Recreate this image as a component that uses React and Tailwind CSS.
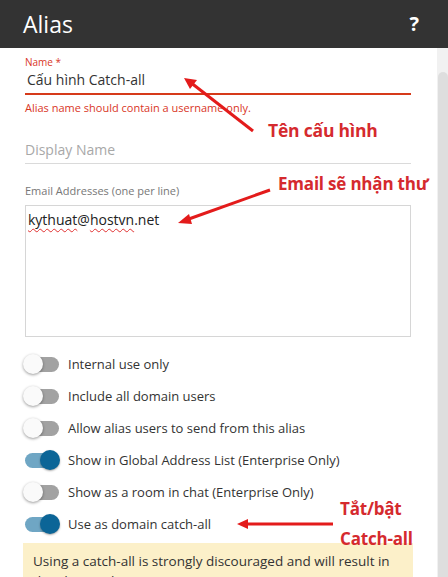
import React from 'react';

const toggles = [
  { label: 'Internal use only', on: false },
  { label: 'Include all domain users', on: false },
  { label: 'Allow alias users to send from this alias', on: false },
  { label: 'Show in Global Address List (Enterprise Only)', on: true },
  { label: 'Show as a room in chat (Enterprise Only)', on: false },
  { label: 'Use as domain catch-all', on: true },
];

const Toggle = ({ on }) => (
  <div className="relative w-[35px] h-[20px] flex items-center shrink-0">
    <div className={`w-[34px] h-[15px] rounded-full ${on ? 'bg-[#6fa6c4]' : 'bg-[#a2a2a2]'}`} />
    {on ? (
      <div className="absolute right-0 top-0 w-[20px] h-[20px] rounded-full bg-[#0b6597] shadow-[0_1px_2px_rgba(0,0,0,0.35)]" />
    ) : (
      <div className="absolute left-[-2px] top-0 w-[20px] h-[20px] rounded-full bg-[#fafafa] shadow-[0_1px_3px_rgba(0,0,0,0.4)]" />
    )}
  </div>
);

const Squiggle = ({ children }) => (
  <span className="underline decoration-wavy decoration-[#e03030] decoration-1 underline-offset-[3px]">{children}</span>
);

export default function App() {
  return (
    <div className="w-[448px] h-[577px] overflow-hidden bg-white font-['Open_Sans',sans-serif] relative">
      <div className="h-[48px] bg-[#333333] flex items-center justify-between pl-[23px] pr-[29px]">
        <span className="text-white text-[23px] leading-none">Alias</span>
        <span className="text-white text-[20px] font-bold leading-none">?</span>
      </div>

      <div className="flex">
        <div className="w-[437px] pl-[25px] pr-[26px]">
          <div className="pt-[7px]">
            <div className="text-[10px] leading-[14px] text-[#d9361f]">Name *</div>
            <div className="text-[14px] leading-[20px] text-[#333] pl-[2px] pt-[1px]">Cấu hình Catch-all</div>
            <div className="h-[2px] bg-[#d63a1a] mt-[3px]" />
            <div className="text-[11px] leading-[14px] text-[#d9361f] mt-[6px]">Alias name should contain a username only.</div>
          </div>

          <div className="mt-[25px] text-[14px] leading-[20px] text-[#a8a8a8]">Display Name</div>
          <div className="h-px bg-[#dadada] mt-[3px]" />

          <div className="mt-[20px] text-[11px] leading-[14px] text-[#777]">Email Addresses (one per line)</div>
          <div className="mt-[7px] h-[132px] border border-[#d6d6d6] px-[2px] pt-[4px] text-[14px] leading-[20px] text-[#222]">
            <Squiggle>kythuat</Squiggle>@<Squiggle>hostvn</Squiggle>.net
          </div>

          <div className="mt-[17px] flex flex-col gap-[12px]">
            {toggles.map((t) => (
              <div key={t.label} className="flex items-center gap-[8px] h-[20px]">
                <Toggle on={t.on} />
                <span className="text-[13px] text-[#333] leading-[20px]">{t.label}</span>
              </div>
            ))}
          </div>

          <div className="mt-[9px] -ml-[2px] -mr-[2px] bg-[#fcf0c9] px-[10px] pt-[8px] h-[60px] text-[13.5px] leading-[20px] text-[#333]">
            Using a catch-all is strongly discouraged and will result in
            <br />
            this domain becoming a spam target.
          </div>
        </div>
        <div className="w-[11px] bg-[#f1f1f1] pt-[24px] pl-[1px]">
          <div className="h-[600px] bg-[#dedede] rounded-t-[5px]" />
        </div>
      </div>

      <svg className="absolute inset-0 pointer-events-none" width="448" height="577">
        <line x1="253" y1="131" x2="190" y2="82" stroke="#e31b1b" strokeWidth="3" />
        <path d="M184,78 L197,80 L190,89 z" fill="#e31b1b" />
        <line x1="270" y1="190" x2="186" y2="220" stroke="#e31b1b" strokeWidth="3" />
        <path d="M178,223 L189,214 L192,224 z" fill="#e31b1b" />
        <line x1="333" y1="524" x2="246" y2="524" stroke="#e31b1b" strokeWidth="3" />
        <path d="M237,524 L248,519 L248,529 z" fill="#e31b1b" />
      </svg>
      <div className="absolute left-[268px] top-[118px] text-[17.5px] font-bold leading-[24px] text-[#d52a2e] tracking-[-0.2px]">Tên cấu hình</div>
      <div className="absolute left-[278px] top-[172px] text-[17px] font-bold leading-[24px] text-[#d52a2e] tracking-[-0.2px]">Email sẽ nhận thư</div>
      <div className="absolute left-[340px] top-[494px] text-[17px] font-bold leading-[30px] text-[#d52a2e] tracking-[-0.2px]">
        <div>Tắt/bật</div>
        <div>Catch-all</div>
      </div>
    </div>
  );
}
